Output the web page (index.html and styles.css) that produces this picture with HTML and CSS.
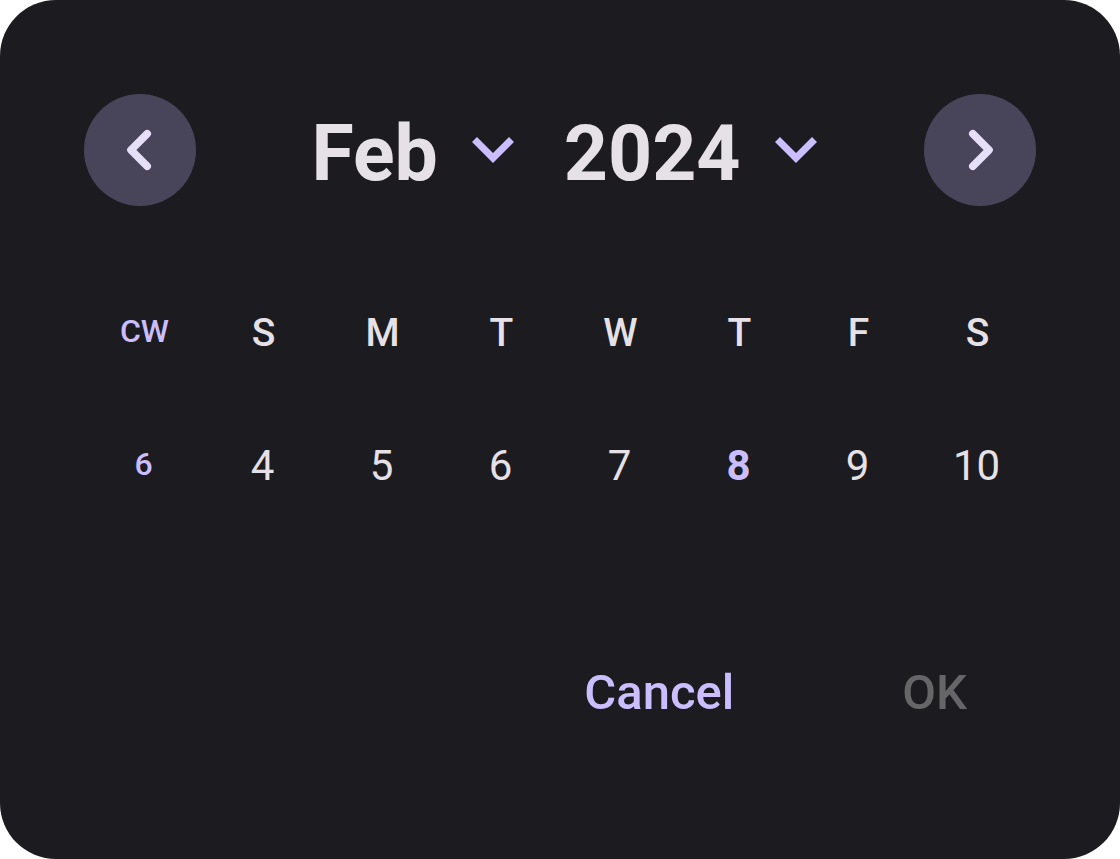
FILE: index.html
```html
<!DOCTYPE html>
<html lang="en">
<head>
<meta charset="utf-8">
<meta name="viewport" content="width=device-width, initial-scale=1">
<title>Date picker</title>
<link rel="stylesheet" href="styles.css">
</head>
<body>
<main class="picker">
  <header class="header">
    <button class="nav" type="button" aria-label="Previous month">
      <svg class="nav-icon" viewBox="0 0 48 48" aria-hidden="true"><path d="M31.2 7.8 15 24l16.2 16.2"/></svg>
    </button>
    <div class="selectors">
      <button class="selector" type="button"><span class="selector-label">Feb</span>
        <svg class="caret" viewBox="0 0 42 26" aria-hidden="true"><path d="M2.5 2.5 21 21 39.5 2.5"/></svg>
      </button>
      <button class="selector" type="button"><span class="selector-label">2024</span>
        <svg class="caret" viewBox="0 0 42 26" aria-hidden="true"><path d="M2.5 2.5 21 21 39.5 2.5"/></svg>
      </button>
    </div>
    <button class="nav" type="button" aria-label="Next month">
      <svg class="nav-icon" viewBox="0 0 48 48" aria-hidden="true"><path d="M16.8 7.8 33 24 16.8 40.2"/></svg>
    </button>
  </header>
  <table class="calendar">
    <thead>
      <tr><th class="week" scope="col">CW</th><th scope="col">S</th><th scope="col">M</th><th scope="col">T</th><th scope="col">W</th><th scope="col">T</th><th scope="col">F</th><th scope="col">S</th></tr>
    </thead>
    <tbody>
      <tr><th class="week" scope="row">6</th><td>4</td><td>5</td><td>6</td><td>7</td><td class="today">8</td><td>9</td><td>10</td></tr>
    </tbody>
  </table>
  <footer class="actions">
    <button class="action" type="button">Cancel</button>
    <button class="action" type="button" disabled>OK</button>
  </footer>
</main>
</body>
</html>
```

FILE: styles.css
```css
* { box-sizing: border-box; }
body {
  margin: 0;
  background: #fff;
  font-family: Roboto, sans-serif;
}
button {
  border: 0;
  padding: 0;
  background: none;
  color: inherit;
  font: inherit;
}
.picker {
  display: flex;
  flex-direction: column;
  min-height: 100vh;
  padding: 94px 84px 110px;
  border-radius: 56px;
  background: #1c1b1f;
  color: #e6e1e6;
}
.header {
  display: flex;
  align-items: center;
  justify-content: space-between;
}
.nav {
  display: grid;
  place-items: center;
  width: 112px;
  height: 112px;
  border-radius: 50%;
  background: #48455a;
  color: #e5dff9;
}
.nav-icon {
  width: 48px;
  height: 48px;
  fill: none;
  stroke: currentColor;
  stroke-width: 7.6;
  stroke-linecap: round;
  stroke-linejoin: round;
}
.selectors {
  display: flex;
  gap: 50px;
  padding-left: 8px;
}
.selector {
  display: flex;
  align-items: center;
  gap: 34px;
  font-size: 77px;
  font-weight: 700;
  line-height: 104px;
}
.selector-label {
  padding-top: 8px;
}
.caret {
  width: 42px;
  height: 26px;
  fill: none;
  stroke: #cabeff;
  stroke-width: 7;
}
.calendar {
  width: 100%;
  margin-top: 60px;
  border-collapse: collapse;
  table-layout: fixed;
  text-align: center;
}
.calendar th,
.calendar td {
  height: 133px;
  padding: 0;
  font-size: 42px;
  font-weight: 400;
}
.calendar thead th {
  padding-left: 2px;
  font-size: 39px;
  font-weight: 500;
}
.calendar .week,
.calendar thead .week {
  padding-bottom: 3px;
  color: #cabeff;
  font-size: 32px;
  font-weight: 500;
}
.calendar .today {
  color: #cabeff;
  font-weight: 700;
}
.actions {
  display: flex;
  justify-content: flex-end;
  gap: 168px;
  margin-top: auto;
  padding-right: 69px;
}
.action {
  color: #cabeff;
  font-size: 49px;
  font-weight: 500;
  line-height: 112px;
}
.action:disabled { color: #666568; }
```
